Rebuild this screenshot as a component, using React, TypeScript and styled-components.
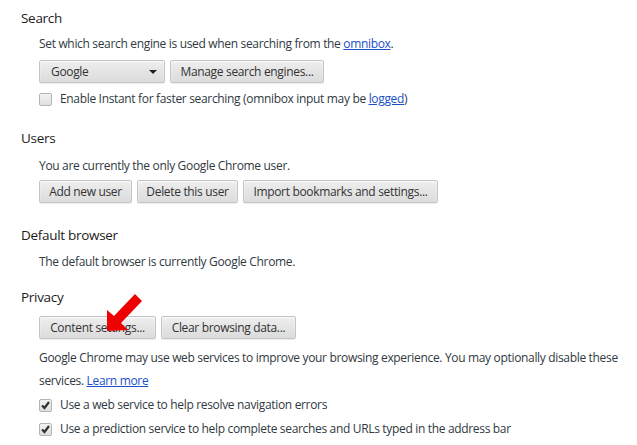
import React from "react";
import styled, { createGlobalStyle } from "styled-components";

const Global = createGlobalStyle`
  html, body { margin: 0; padding: 0; background: #ffffff; }
  body {
    font-family: "Open Sans", "Noto Sans", sans-serif;
    font-size: 12px;
    letter-spacing: -0.33px;
    color: #303942;
  }
`;

const Page = styled.div`
  position: relative;
  width: 637px;
  height: 445px;
  overflow: hidden;
  padding: 9px 0 0 21px;
  box-sizing: border-box;
`;

const Section = styled.section<{ $gap?: number }>`
  display: flex;
  flex-direction: column;
  margin-bottom: ${(p) => p.$gap ?? 0}px;
`;

const Heading = styled.h3`
  margin: 0;
  font-size: 13.5px;
  letter-spacing: -0.3px;
  font-weight: normal;
  line-height: 18px;
  color: #1c1c1c;
`;

const Body = styled.div`
  display: flex;
  flex-direction: column;
  padding-left: 18px;
`;

const Text = styled.div<{ $mt?: number; $lh?: number }>`
  margin-top: ${(p) => p.$mt ?? 0}px;
  line-height: ${(p) => p.$lh ?? 22}px;
`;

const Link = styled.a`
  color: #1a50c8;
  text-decoration: underline;
  cursor: pointer;
`;

const Row = styled.div<{ $mt?: number }>`
  display: flex;
  gap: 5px;
  margin-top: ${(p) => p.$mt ?? 0}px;
`;

const Button = styled.button<{ $w: number }>`
  height: 23px;
  width: ${(p) => p.$w}px;
  box-sizing: border-box;
  padding: 0;
  border: 1px solid #c4c4c4;
  border-radius: 2px;
  background: linear-gradient(#efefef, #e5e5e5 45%, #dcdcdc);
  box-shadow: 0 1px 0 rgba(0, 0, 0, 0.07), inset 0 1px 2px rgba(255, 255, 255, 0.8);
  font-family: inherit;
  font-size: 12px;
  letter-spacing: -0.33px;
  color: #333333;
  display: flex;
  align-items: center;
  justify-content: center;
`;

const Select = styled(Button)`
  justify-content: space-between;
  padding: 0 7px 0 11px;
`;

const Caret = styled.span`
  width: 0;
  height: 0;
  border-left: 4px solid transparent;
  border-right: 4px solid transparent;
  border-top: 4px solid #202020;
`;

const Check = styled.label<{ $mt?: number }>`
  display: flex;
  align-items: center;
  gap: 8px;
  margin-top: ${(p) => p.$mt ?? 0}px;
  line-height: 22px;
`;

const Box = styled.span`
  width: 13px;
  height: 13px;
  box-sizing: border-box;
  border: 1px solid #b4b4b4;
  border-radius: 2px;
  background: linear-gradient(#f2f2f2, #e0e0e0);
  display: flex;
  align-items: center;
  justify-content: center;
  flex: none;
`;

const Arrow = styled.svg`
  position: absolute;
  left: 100px;
  top: 290px;
`;

function CheckBox({ checked }: { checked?: boolean }) {
  return (
    <Box>
      {checked && (
        <svg width="11" height="11" viewBox="0 0 11 11">
          <path d="M2 5.5 L4.5 8 L9 2" fill="none" stroke="#303030" strokeWidth="2.2" />
        </svg>
      )}
    </Box>
  );
}

export default function App() {
  return (
    <>
      <Global />
      <Page>
        <Section $gap={19}>
          <Heading>Search</Heading>
          <Body>
            <Text $mt={6}>
              Set which search engine is used when searching from the <Link>omnibox</Link>.
            </Text>
            <Row $mt={5}>
              <Select $w={126}>
                <span>Google</span>
                <Caret />
              </Select>
              <Button $w={154}>Manage search engines...</Button>
            </Row>
            <Check $mt={5}>
              <CheckBox />
              <span>
                Enable Instant for faster searching (omnibox input may be <Link>logged</Link>)
              </span>
            </Check>
          </Body>
        </Section>
        <Section $gap={23}>
          <Heading>Users</Heading>
          <Body>
            <Text $mt={8}>You are currently the only Google Chrome user.</Text>
            <Row $mt={3}>
              <Button $w={93}>Add new user</Button>
              <Button $w={101}>Delete this user</Button>
              <Button $w={195}>Import bookmarks and settings...</Button>
            </Row>
          </Body>
        </Section>
        <Section $gap={15}>
          <Heading>Default browser</Heading>
          <Body>
            <Text $mt={7}>The default browser is currently Google Chrome.</Text>
          </Body>
        </Section>
        <Section>
          <Heading>Privacy</Heading>
          <Body>
            <Row $mt={10}>
              <Button $w={117}>Content settings...</Button>
              <Button $w={135}>Clear browsing data...</Button>
            </Row>
            <Text $mt={7} $lh={23}>
              Google Chrome may use web services to improve your browsing experience. You may optionally disable these
              services. <Link>Learn more</Link>
            </Text>
            <Check $mt={2}>
              <CheckBox checked />
              <span>Use a web service to help resolve navigation errors</span>
            </Check>
            <Check $mt={2}>
              <CheckBox checked />
              <span>Use a prediction service to help complete searches and URLs typed in the address bar</span>
            </Check>
          </Body>
        </Section>
        <Arrow width="45" height="45" viewBox="0 0 45 45">
          <path d="M7 41 L7 20 L14 26 L35 4 L42 11 L21 33 L28 40 Z" fill="#ee0000" />
        </Arrow>
      </Page>
    </>
  );
}
